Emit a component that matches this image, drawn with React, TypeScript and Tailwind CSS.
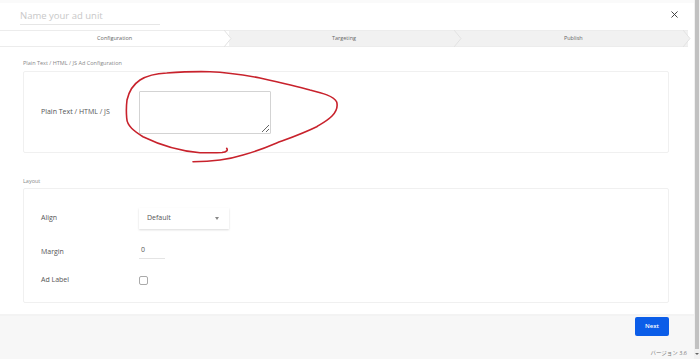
import { X } from "lucide-react";

const font = { fontFamily: '"Open Sans", "Noto Sans CJK JP", sans-serif' };

function Steps() {
  const steps = ["Configuration", "Targeting", "Publish"];
  return (
    <div className="relative flex h-[17px] mt-[5px] mr-[6px] border-y border-[#ececec] bg-[#f1f1f1]">
      {steps.map((s, i) => (
        <div key={s} className="relative flex-1 flex items-center justify-center">
          {i === 0 && <div className="absolute inset-0 bg-white" />}
          <span className="relative text-[5.5px] text-[#666]">{s}</span>
          <svg
            className="absolute right-[-7px] top-[-1px] z-10"
            width="12"
            height="17"
            viewBox="0 0 12 17"
          >
            <path
              d="M0 0 L7 8.5 L0 17"
              fill={i === 0 ? "#ffffff" : "#f1f1f1"}
              stroke="#e2e2e2"
              strokeWidth="1"
            />
          </svg>
        </div>
      ))}
    </div>
  );
}

function Annotation() {
  return (
    <svg
      className="absolute left-0 top-0 pointer-events-none"
      width="700"
      height="359"
      viewBox="0 0 700 359"
    >
      <path
        d="M226.7 148.3 C228 150 227 152 222 152.5 C214 153 205 152.7 200 152.7 C180 151 158 144 143 136.7 C134 131 127 126 126.7 118 C126 110 126.5 104 127 100 C129 91 134 84 140 80 C148 75 156 73.5 166.7 73 C180 72 196 71.3 210 71.7 C228 72.3 244 75 260 78 C278 82 296 86 310 90 C322 93 334 96 336.7 102 C338 107 336 112 332 116 C327 121 321 124 316.7 126.7 C304 133 290 138 276.7 143 C265 148 254 152 243 155 C235 157.5 228 159 220 160 C210 161.2 200 161.6 193 161.7"
        fill="none"
        stroke="#c8222c"
        strokeWidth="1.6"
        strokeLinecap="round"
      />
    </svg>
  );
}

export default function App() {
  return (
    <div className="relative flex w-[700px] h-[359px] overflow-hidden bg-white" style={font}>
      <div className="flex flex-col w-[694px]">
        {/* header */}
        <div className="flex items-end justify-between h-[25px] pl-[20px] pr-[14px] border-t-[3px] border-[#fafafa]">
          <div className="w-[140px] border-b border-[#e6e6e6] pb-[2px] text-[9.5px] leading-[12px] text-[#c8c8c8]">
            Name your ad unit
          </div>
          <X className="mb-[5px] w-[11px] h-[11px] text-[#333]" strokeWidth={2} />
        </div>

        <Steps />

        <div className="flex flex-col px-[23px] pr-[25px]">
          <div className="mt-[12px] text-[5.5px] leading-[8px] text-[#888]">
            Plain Text / HTML / JS Ad Configuration
          </div>
          <div className="mt-[4px] h-[82px] rounded-[2px] border border-[#f0f0f0] flex items-center pl-[17px]">
            <div className="w-[98px] text-[7px] text-[#555]">Plain Text / HTML / JS</div>
            <textarea className="w-[132px] h-[43px] border border-[#d3d3d3] rounded-[1px] resize-y" />
          </div>

          <div className="mt-[24px] text-[5.5px] leading-[8px] text-[#888]">Layout</div>
          <div className="mt-[3px] h-[115px] rounded-[2px] border border-[#f0f0f0] flex flex-col pl-[17px] pt-[19px]">
            <div className="flex items-center h-[21px]">
              <div className="w-[98px] text-[7px] text-[#555]">Align</div>
              <div className="w-[90px] h-[21px] flex items-center justify-between pl-[8px] pr-[10px] bg-white shadow-[0_1px_2px_rgba(0,0,0,0.15)]">
                <span className="text-[7px] text-[#555]">Default</span>
                <span className="w-0 h-0 border-x-[2.5px] border-x-transparent border-t-[3px] border-t-[#888]" />
              </div>
            </div>
            <div className="flex items-center h-[20px] mt-[13px]">
              <div className="w-[98px] text-[7px] text-[#555]">Margin</div>
              <div className="w-[26px] pl-[2px] pb-[3px] border-b border-[#e4e4e4] text-[7px] text-[#555]">0</div>
            </div>
            <div className="flex items-center h-[16px] mt-[10px]">
              <div className="w-[98px] text-[7px] text-[#555]">Ad Label</div>
              <div className="w-[9px] h-[9px] border border-[#aaa] rounded-[2px] bg-white" />
            </div>
          </div>
        </div>

        {/* footer */}
        <div className="mt-[11px] flex-1 bg-[#f7f7f7] border-t-[2px] border-[#f3f3f3] flex flex-col items-end pr-[25px]">
          <button className="mt-[1px] w-[34px] h-[19px] rounded-[2px] bg-[#0b5de8] text-white text-[6px] font-semibold">
            Next
          </button>
          <div className="mt-auto mb-[2px] mr-[-18px] text-[5.5px] text-[#777]">バージョン 3.6</div>
        </div>
      </div>

      {/* scrollbar */}
      <div className="w-[6px] flex flex-col bg-[#f1f1f1]">
        <div className="flex-1 mx-[1px] bg-[#c1c1c1]" />
        <div className="h-[10px] flex items-center justify-center">
          <span className="w-0 h-0 border-x-[2px] border-x-transparent border-t-[2px] border-t-[#666]" />
        </div>
      </div>

      <Annotation />
    </div>
  );
}
